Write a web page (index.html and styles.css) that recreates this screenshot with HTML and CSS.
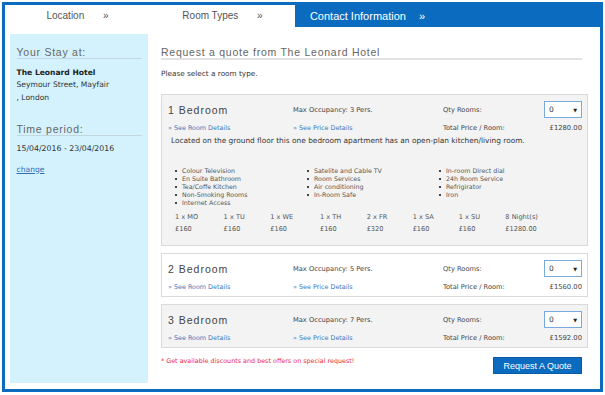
FILE: index.html
```html
<!DOCTYPE html>
<html lang="en">
<head>
    <meta charset="UTF-8">
    <meta name="viewport" content="width=device-width, initial-scale=1.0">
    <title>Request a Quote</title>
    <link rel="stylesheet" href="styles.css">
</head>
<body>
    <div class="frame">
        <div class="tabs">
            <div class="tab">Location <span class="raquo">&raquo;</span></div>
            <div class="tab">Room Types <span class="raquo">&raquo;</span></div>
            <div class="tab active">Contact Information <span class="raquo">&raquo;</span></div>
        </div>
        <div class="content">
            <div class="sidebar">
                <h3 class="side-title">Your Stay at:</h3>
                <div class="side-text">
                    <strong>The Leonard Hotel</strong><br>
                    Seymour Street, Mayfair<br>
                    , London
                </div>
                <h3 class="side-title second">Time period:</h3>
                <div class="side-dates">15/04/2016 - 23/04/2016</div>
                <a href="#" class="side-link">change</a>
            </div>
            <div class="main">
                <h2 class="main-title">Request a quote from The Leonard Hotel</h2>
                <p class="intro">Please select a room type.</p>

                <div class="room">
                    <div class="room-row top">
                        <div class="room-name">1 Bedroom</div>
                        <div class="room-occ">Max Occupancy: 3 Pers.</div>
                        <div class="room-label">Qty Rooms:</div>
                        <div class="qty"><span>0</span><span class="arrow">&#9660;</span></div>
                    </div>
                    <div class="room-row links">
                        <a href="#" class="room-name">&raquo; See Room Details</a>
                        <a href="#" class="room-occ">&raquo; See Price Details</a>
                        <div class="room-label">Total Price / Room:</div>
                        <div class="price">&pound;1280.00</div>
                    </div>
                    <p class="desc">Located on the ground floor this one bedroom apartment has an open-plan kitchen/living room.</p>
                    <div class="amenities">
                        <ul>
                            <li>Colour Television</li>
                            <li>En Suite Bathroom</li>
                            <li>Tea/Coffe Kitchen</li>
                            <li>Non-Smoking Rooms</li>
                            <li>Internet Access</li>
                        </ul>
                        <ul>
                            <li>Satelite and Cable TV</li>
                            <li>Room Services</li>
                            <li>Air conditioning</li>
                            <li>In-Room Safe</li>
                        </ul>
                        <ul>
                            <li>In-room Direct dial</li>
                            <li>24h Room Service</li>
                            <li>Refrigirator</li>
                            <li>Iron</li>
                        </ul>
                    </div>
                    <div class="nights">
                        <span>1 x MO</span><span>1 x TU</span><span>1 x WE</span><span>1 x TH</span>
                        <span>2 x FR</span><span>1 x SA</span><span>1 x SU</span><span>8 Night(s)</span>
                        <span>&pound;160</span><span>&pound;160</span><span>&pound;160</span><span>&pound;160</span>
                        <span>&pound;320</span><span>&pound;160</span><span>&pound;160</span><span>&pound;1280.00</span>
                    </div>
                </div>

                <div class="room plain">
                    <div class="room-row top">
                        <div class="room-name">2 Bedroom</div>
                        <div class="room-occ">Max Occupancy: 5 Pers.</div>
                        <div class="room-label">Qty Rooms:</div>
                        <div class="qty"><span>0</span><span class="arrow">&#9660;</span></div>
                    </div>
                    <div class="room-row links">
                        <a href="#" class="room-name">&raquo; See Room Details</a>
                        <a href="#" class="room-occ">&raquo; See Price Details</a>
                        <div class="room-label">Total Price / Room:</div>
                        <div class="price">&pound;1560.00</div>
                    </div>
                </div>

                <div class="room">
                    <div class="room-row top">
                        <div class="room-name">3 Bedroom</div>
                        <div class="room-occ">Max Occupancy: 7 Pers.</div>
                        <div class="room-label">Qty Rooms:</div>
                        <div class="qty"><span>0</span><span class="arrow">&#9660;</span></div>
                    </div>
                    <div class="room-row links">
                        <a href="#" class="room-name">&raquo; See Room Details</a>
                        <a href="#" class="room-occ">&raquo; See Price Details</a>
                        <div class="room-label">Total Price / Room:</div>
                        <div class="price">&pound;1592.00</div>
                    </div>
                </div>

                <div class="footer">
                    <p class="note">* Get available discounts and best offers on special request!</p>
                    <button type="button" class="quote-btn">Request A Quote</button>
                </div>
            </div>
        </div>
    </div>
</body>
</html>
```

FILE: styles.css
```css
body {
    margin: 0;
    font-family: "DejaVu Sans", Verdana, sans-serif;
    color: #333;
    background: #fff;
}
.frame {
    margin: 2px 0 0 2px;
    width: 601px;
    height: 390px;
    box-sizing: border-box;
    border: 3px solid #0b6cbf;
}
.tabs {
    display: flex;
    height: 22px;
    background: #0b6cbf;
}
.tab {
    width: 145px;
    line-height: 22px;
    text-align: center;
    background: #fff;
    color: #555;
    font-family: "Liberation Sans", Arial, sans-serif;
    font-size: 10px;
}
.tab .raquo {
    margin-left: 16px;
}
.tab.active {
    background: #0b6cbf;
    color: #fff;
    font-size: 11px;
}
.tab.active .raquo {
    margin-left: 10px;
}
.content {
    display: flex;
    padding: 7px 0 0 5px;
}
.sidebar {
    width: 138px;
    height: 349px;
    box-sizing: border-box;
    padding: 12px 6px 0 6.5px;
    background: #d4f2fd;
}
.side-title {
    margin: 0;
    line-height: 12px;
    font-family: "Liberation Sans", Arial, sans-serif;
    font-size: 10.5px;
    font-weight: normal;
    letter-spacing: 0.75px;
    color: #666;
    border-bottom: 1px solid #c4d6de;
}
.side-title.second {
    margin-top: 19px;
}
.side-text {
    margin-top: 7.5px;
    font-size: 7.6px;
    line-height: 12.5px;
    color: #333;
}
.side-text strong {
    color: #222;
}
.side-dates {
    margin-top: 7px;
    font-size: 7.8px;
    line-height: 12px;
}
.side-link {
    display: block;
    margin-top: 8.5px;
    font-size: 7.6px;
    line-height: 12px;
    color: #2f6db4;
}
.main {
    margin-left: 13px;
    width: 427px;
    padding-top: 12px;
}
.main-title {
    margin: 0 6px 0 0;
    line-height: 12px;
    font-family: "Liberation Sans", Arial, sans-serif;
    font-size: 10.5px;
    font-weight: normal;
    letter-spacing: 0.75px;
    color: #666;
    border-bottom: 2px solid #e2e2e2;
}
.intro {
    margin: 9px 0 0;
    font-size: 7.3px;
    line-height: 10px;
}
.room {
    margin-top: 7px;
    padding: 6px 5px 4px 6px;
    background: #f3f3f3;
    border: 1px solid #dadada;
}
.intro + .room {
    margin-top: 15px;
}
.room.plain {
    background: #fff;
}
.room-row {
    display: flex;
    align-items: center;
}
.room-row.top {
    height: 17px;
}
.room-row.links {
    margin-top: 5px;
    line-height: 10px;
}
.room-name {
    width: 125px;
}
.room-row.top .room-name {
    font-family: "Liberation Sans", Arial, sans-serif;
    font-size: 10.5px;
    letter-spacing: 1px;
    color: #444;
}
.room-occ {
    width: 150px;
}
.room-label {
    width: 101px;
}
.room-row.top .room-occ,
.room-row.top .room-label,
.room-row.links .room-label {
    font-size: 6.7px;
    color: #444;
}
.room-row.links a {
    font-size: 6.4px;
    color: #3a78c0;
    text-decoration: none;
}
.price {
    width: 38px;
    text-align: right;
    font-size: 6.8px;
    color: #444;
}
.qty {
    display: flex;
    justify-content: space-between;
    align-items: center;
    width: 38px;
    height: 17px;
    box-sizing: border-box;
    padding: 0 4px 0 4px;
    background: #fff;
    border: 1px solid #78aadd;
    font-size: 7.5px;
    color: #333;
}
.qty .arrow {
    font-size: 5px;
    color: #222;
}
.desc {
    margin: 2px 0 0 3px;
    font-size: 7.4px;
    line-height: 11px;
}
.amenities {
    display: flex;
    margin-top: 21px;
    padding-left: 6px;
}
.amenities ul {
    width: 132px;
    margin: 0;
    padding: 0;
    list-style: none;
}
.amenities li {
    position: relative;
    padding-left: 8px;
    font-size: 6.3px;
    line-height: 8px;
    color: #555;
}
.amenities li::before {
    content: "";
    position: absolute;
    left: 1px;
    top: 3px;
    width: 2px;
    height: 2px;
    background: #444;
}
.nights {
    display: grid;
    grid-template-columns: 48.6px 46.7px 49.7px 46.7px 46px 46px 46.7px auto;
    margin: 5px 0 6px 7px;
    font-size: 6.6px;
    line-height: 11.5px;
    color: #555;
}
.footer {
    display: flex;
    justify-content: space-between;
    align-items: flex-start;
    margin-top: 9px;
    padding-right: 6px;
}
.note {
    margin: 0;
    font-size: 6.4px;
    line-height: 9px;
    color: #ee2a44;
}
.quote-btn {
    width: 89px;
    height: 17px;
    padding: 0;
    background: #0b6cbf;
    border: 1px solid #0a5ca6;
    color: #fff;
    font-family: "Liberation Sans", Arial, sans-serif;
    font-size: 9px;
}
```
